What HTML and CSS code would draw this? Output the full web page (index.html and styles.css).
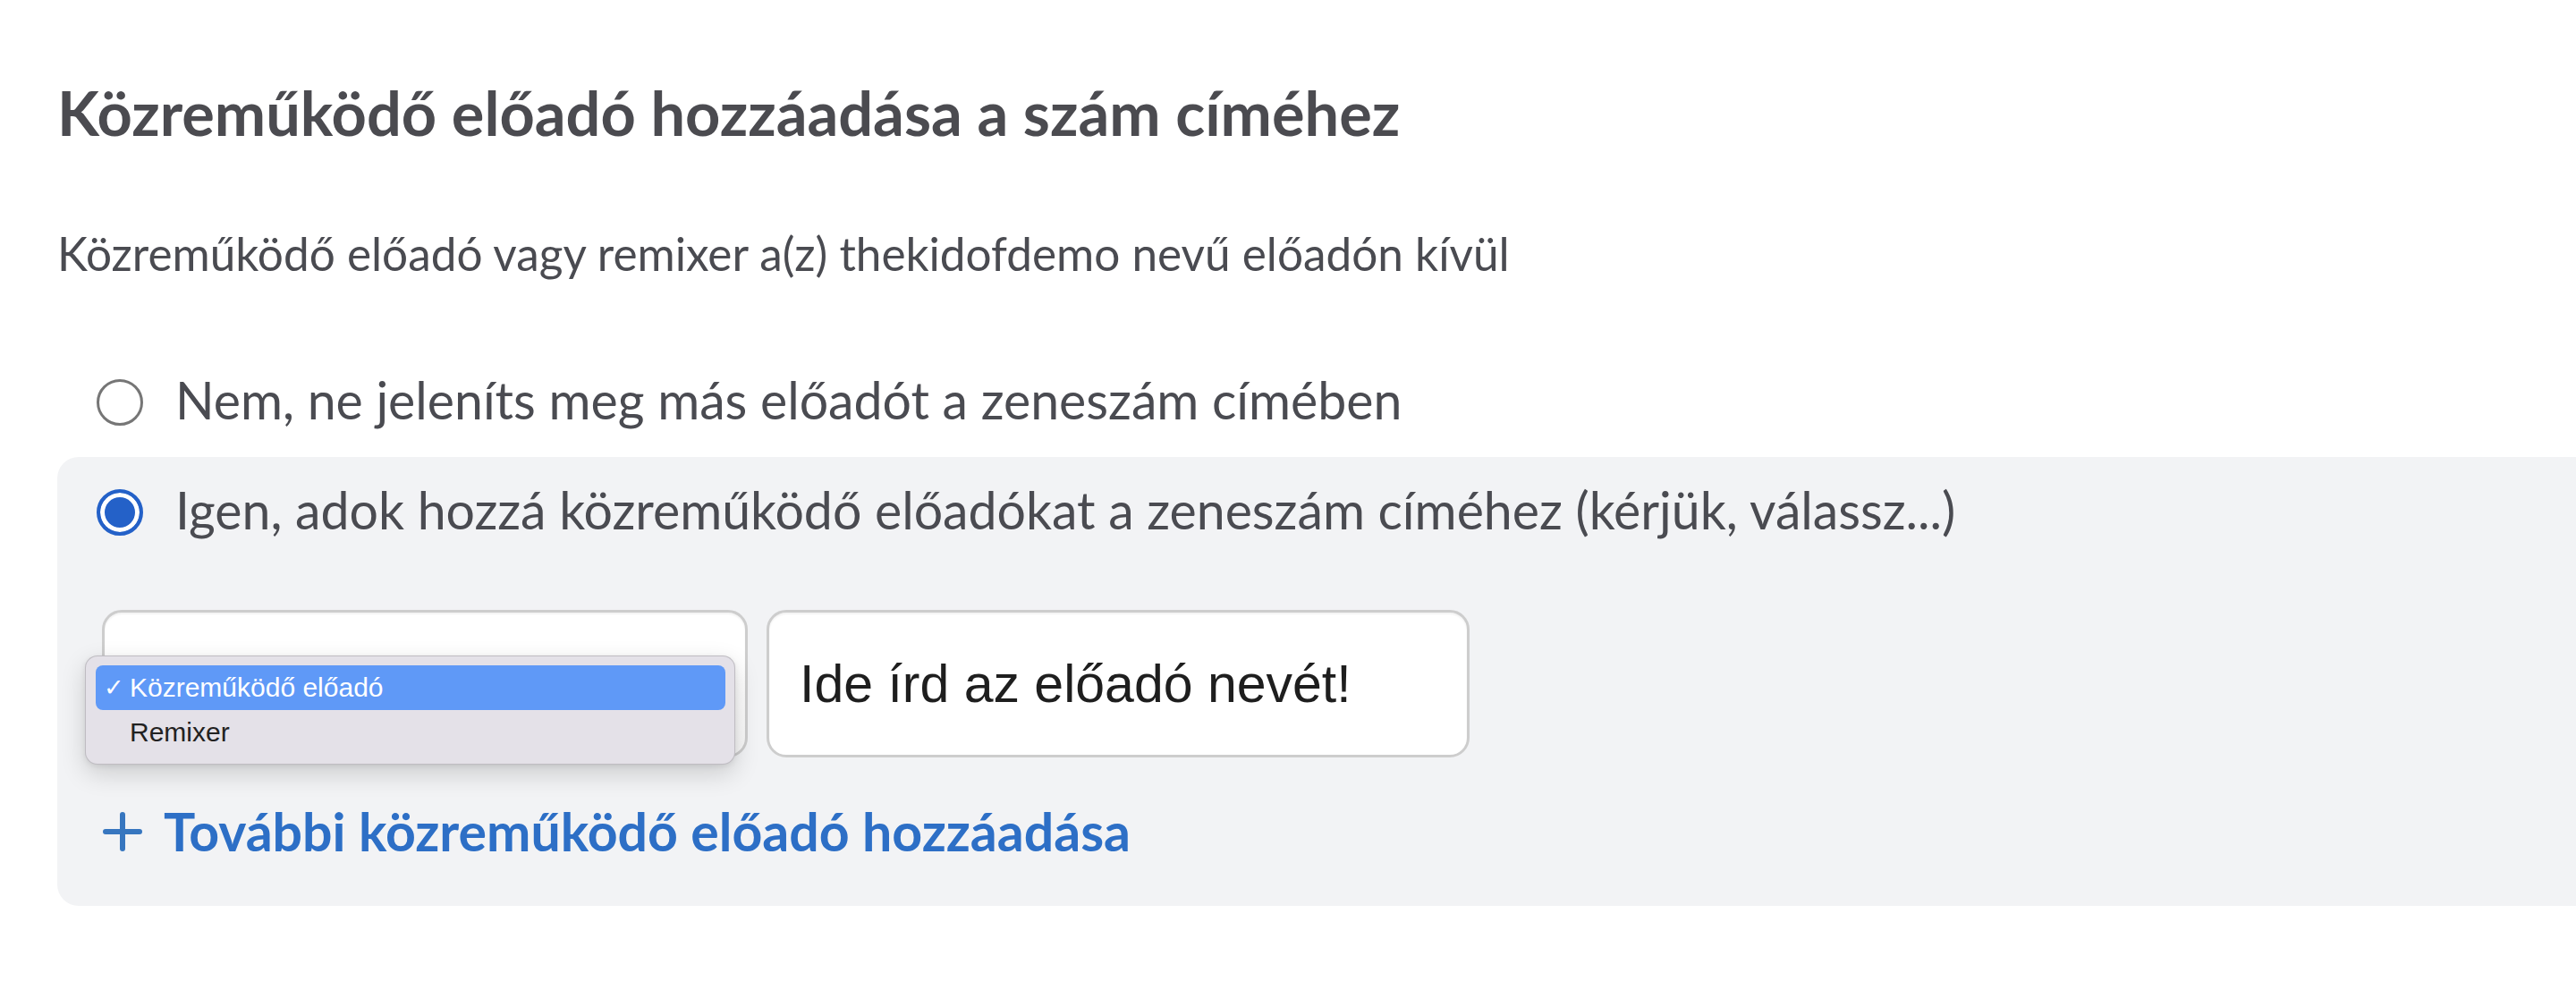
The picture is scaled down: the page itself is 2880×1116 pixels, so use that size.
FILE: index.html
```html
<!DOCTYPE html>
<html lang="hu">
<head>
<meta charset="utf-8">
<title>Közreműködő előadó</title>
<link rel="stylesheet" href="styles.css">
</head>
<body>
<main class="page">
  <h1 class="title">Közreműködő előadó hozzáadása a szám címéhez</h1>
  <p class="subtitle">Közreműködő előadó vagy remixer a(z) thekidofdemo nevű előadón kívül</p>
  <div class="options">
    <div class="option">
      <span class="radio"></span>
      <span class="option-text">Nem, ne jeleníts meg más előadót a zeneszám címében</span>
    </div>
    <section class="panel">
      <div class="option">
        <span class="radio radio--checked"></span>
        <span class="option-text">Igen, adok hozzá közreműködő előadókat a zeneszám címéhez (kérjük, válassz...)</span>
      </div>
      <div class="fields">
        <div class="select-wrap">
          <div class="select-box"></div>
          <ul class="menu">
            <li class="menu-item menu-item--active"><span class="check">✓</span><span>Közreműködő előadó</span></li>
            <li class="menu-item"><span class="check"></span><span>Remixer</span></li>
          </ul>
        </div>
        <div class="text-input">Ide írd az előadó nevét!</div>
      </div>
      <a class="add-link" href="#">
        <svg class="plus" viewBox="0 0 44 44" width="44" height="44" aria-hidden="true">
          <path d="M22 3 V41 M3 22 H41" stroke="currentColor" stroke-width="6" stroke-linecap="round" fill="none"/>
        </svg>
        <span>További közreműködő előadó hozzáadása</span>
      </a>
    </section>
  </div>
</main>
</body>
</html>
```

FILE: styles.css
```css
* { box-sizing: border-box; }

html, body {
  margin: 0;
  padding: 0;
  background: #ffffff;
}

body {
  font-family: Lato, "Noto Sans", "Liberation Sans", sans-serif;
  color: #4a4b51;
}

.page {
  padding: 84px 0 0 64px;
}

.title {
  margin: 0;
  font-size: 68.5px;
  line-height: 84px;
  font-weight: 700;
  color: #4b4b50;
}

.subtitle {
  margin: 85px 0 0;
  font-size: 51.3px;
  line-height: 60px;
  font-weight: 400;
}

.options {
  margin-top: 100px;
}

.option {
  display: flex;
  align-items: center;
  gap: 36px;
  padding-left: 44px;
}

.option-text {
  font-size: 57.2px;
  line-height: 68px;
}

.radio {
  flex: none;
  width: 52px;
  height: 52px;
  margin-top: 6px;
  border-radius: 50%;
  border: 3px solid #767676;
  background: #ffffff;
}

.radio--checked {
  border: 4px solid #2461c8;
  background: #2461c8;
  box-shadow: inset 0 0 0 5px #ffffff;
}

.panel {
  margin-top: 30px;
  background: #f2f3f5;
  border-radius: 24px 0 0 24px;
  padding: 25px 0 47px 0;
}

.fields {
  display: flex;
  gap: 21px;
  margin: 78px 0 0 50px;
}

.select-wrap {
  position: relative;
  width: 722px;
  height: 165px;
}

.select-box {
  width: 100%;
  height: 100%;
  background: linear-gradient(#ffffff 40%, #f7f7f7);
  border: 3px solid #cdcdcd;
  border-radius: 22px;
  box-shadow: inset 0 2px 2px rgba(0, 0, 0, 0.05);
}

.menu {
  position: absolute;
  left: -19px;
  top: 51px;
  width: 727px;
  margin: 0;
  padding: 10px 10px 10px 11px;
  list-style: none;
  background: #e4e1e8;
  border: 1px solid rgba(0, 0, 0, 0.16);
  border-radius: 14px;
  box-shadow: 0 10px 28px rgba(0, 0, 0, 0.16), 0 2px 6px rgba(0, 0, 0, 0.08);
  font-family: "Liberation Sans", Arial, sans-serif;
  font-size: 30px;
  color: #222222;
}

.menu-item {
  display: flex;
  align-items: center;
  height: 50px;
  padding-left: 9px;
  border-radius: 8px;
}

.menu-item--active {
  background: #5f99f7;
  color: #ffffff;
}

.check {
  width: 29px;
  flex: none;
  font-size: 27px;
}

.text-input {
  display: flex;
  align-items: center;
  width: 786px;
  height: 165px;
  padding-left: 34px;
  background: #ffffff;
  border: 3px solid #cdcdcd;
  border-radius: 22px;
  box-shadow: inset 0 2px 2px rgba(0, 0, 0, 0.05);
  font-family: "Liberation Sans", Arial, sans-serif;
  font-size: 59px;
  color: #1e1e1e;
}

.add-link {
  display: flex;
  align-items: center;
  gap: 24px;
  margin: 47px 0 0 51px;
  width: max-content;
  color: #2d6fc6;
  text-decoration: none;
  font-size: 59px;
  line-height: 72px;
  font-weight: 700;
}

.plus {
  flex: none;
  color: #3776bf;
}
```
